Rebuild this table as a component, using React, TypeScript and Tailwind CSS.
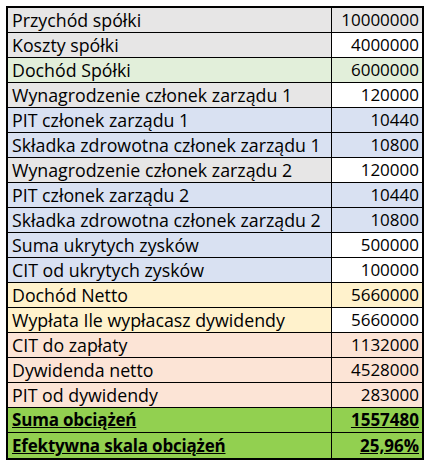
const GRAY = 'bg-[#e7e6e6]';
const LGREEN = 'bg-[#e2efda]';
const BLUE = 'bg-[#d9e1f2]';
const YELLOW = 'bg-[#fff2cc]';
const PEACH = 'bg-[#fce4d6]';
const GREEN = 'bg-[#92d050]';
const WHITE = 'bg-white';

type Row = { label: string; value: string; lbg: string; vbg: string; bold?: boolean };

const rows: Row[] = [
  { label: 'Przychód spółki', value: '10000000', lbg: GRAY, vbg: GRAY },
  { label: 'Koszty spółki', value: '4000000', lbg: GRAY, vbg: WHITE },
  { label: 'Dochód Spółki', value: '6000000', lbg: LGREEN, vbg: LGREEN },
  { label: 'Wynagrodzenie członek zarządu 1', value: '120000', lbg: GRAY, vbg: WHITE },
  { label: 'PIT członek zarządu 1', value: '10440', lbg: BLUE, vbg: BLUE },
  { label: 'Składka zdrowotna członek zarządu 1', value: '10800', lbg: BLUE, vbg: BLUE },
  { label: 'Wynagrodzenie członek zarządu 2', value: '120000', lbg: GRAY, vbg: WHITE },
  { label: 'PIT członek zarządu 2', value: '10440', lbg: BLUE, vbg: BLUE },
  { label: 'Składka zdrowotna członek zarządu 2', value: '10800', lbg: BLUE, vbg: BLUE },
  { label: 'Suma ukrytych zysków', value: '500000', lbg: BLUE, vbg: WHITE },
  { label: 'CIT od ukrytych zysków', value: '100000', lbg: BLUE, vbg: WHITE },
  { label: 'Dochód Netto', value: '5660000', lbg: YELLOW, vbg: YELLOW },
  { label: 'Wypłata Ile wypłacasz dywidendy', value: '5660000', lbg: YELLOW, vbg: WHITE },
  { label: 'CIT do zapłaty', value: '1132000', lbg: PEACH, vbg: PEACH },
  { label: 'Dywidenda netto', value: '4528000', lbg: PEACH, vbg: PEACH },
  { label: 'PIT od dywidendy', value: '283000', lbg: PEACH, vbg: PEACH },
  { label: 'Suma obciążeń', value: '1557480', lbg: GREEN, vbg: GREEN, bold: true },
  { label: 'Efektywna skala obciążeń', value: '25,96%', lbg: GREEN, vbg: GREEN, bold: true },
];

export default function App() {
  return (
    <div className="min-h-[468px] w-[430px] bg-white pl-[6px] pt-[6px] font-['Open_Sans',sans-serif] text-[17px] text-black">
      <div className="flex w-[418px] flex-col border-2 border-black">
        {rows.map((r, i) => (
          <div
            key={r.label}
            className={`flex h-[25px] ${i < rows.length - 1 ? 'border-b border-black' : 'h-[24px]'}`}
          >
            <div
              className={`flex w-[324px] items-center whitespace-nowrap border-r border-black pl-[4px] ${r.lbg} ${
                r.bold ? 'font-bold tracking-[-0.2px] underline' : 'text-[17.8px]'
              }`}
            >
              {r.label}
            </div>
            <div
              className={`flex flex-1 items-center justify-end pr-[3px] ${r.vbg} ${r.bold ? 'font-bold underline' : ''}`}
            >
              {r.value}
            </div>
          </div>
        ))}
      </div>
    </div>
  );
}
